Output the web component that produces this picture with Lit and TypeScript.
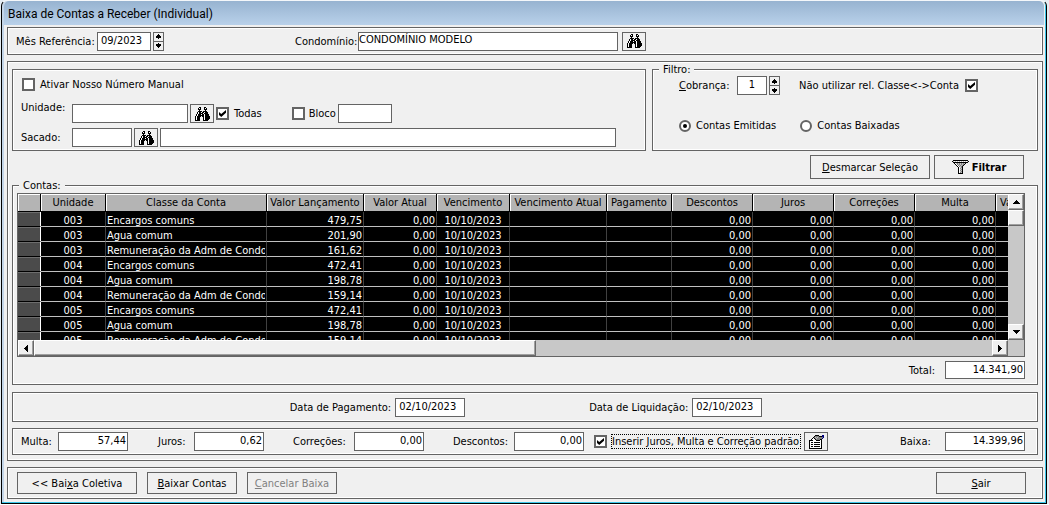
import { LitElement, html, css, svg } from "lit";
import { customElement } from "lit/decorators.js";

/** Turns rows of characters into crisp one-unit squares. */
const palette: Record<string, string> = {
  "#": "#000000",
  w: "#ffffff",
  g: "#808080",
  l: "#c0c0c0",
  b: "#000080",
};
const pixels = (rows: string[], cls = "icon") => {
  const w = Math.max(...rows.map((r) => r.length));
  return html`<svg class=${cls} width=${w} height=${rows.length} viewBox="0 0 ${w} ${rows.length}" shape-rendering="crispEdges" aria-hidden="true">
    ${rows.flatMap((r, y) =>
      [...r].map((c, x) => (palette[c] ? svg`<rect x=${x} y=${y} width="1" height="1" fill=${palette[c]}></rect>` : null))
    )}
  </svg>`;
};

const BINOCULARS = [
  "....##...##....",
  "...#w#...#w#...",
  "...###...###...",
  "....#.....#....",
  "...####.####...",
  "..#w##w##w###..",
  "..#w####w####..",
  ".#w###w##w####.",
  ".#w######w####.",
  "#w####.##w#####",
  "#w###...#w#####",
  "#w###...#w#####",
  "#w###...#w####.",
  "#####...#####..",
];

const FUNNEL = [
  ".###############.",
  "#lwlwlwlwlwlwlwl#",
  ".###############.",
  "..#wlglglglgl#...",
  "...#wglglglg#....",
  "....#wglglg#.....",
  ".....#wglg#......",
  "......#wlg#......",
  "......#wgl#......",
  "......#wlg#......",
  "......#wgl#......",
  "......#wlg#......",
  "......#wgl#......",
  "......#####......",
];

const PROPERTIES = [
  "......####...bb",
  ".....#gggg###bb",
  "....#glglgggggb",
  "...#w#glgggggb.",
  "..#www#gggg##..",
  "####www####w#..",
  "#wwwwwwwwwww#..",
  "#w##w######w#..",
  "#wwwwwwwwwww#..",
  "#w##w######w#..",
  "#wwwwwwwwwww#..",
  "#w##w######w#..",
  "#wwwwwwwwwww#..",
  "#############..",
];

const UP = ["...#...", "..###..", ".#####.", "#######"];
const DOWN = ["#######", ".#####.", "..###..", "...#..."];
const SPIN_UP = ["..#..", ".###.", "#####", "#####", "..#.."];
const SPIN_DOWN = ["..#..", "#####", "#####", ".###.", "..#.."];
const LEFT = ["...#", "..##", ".###", "####", ".###", "..##", "...#"];
const RIGHT = ["#...", "##..", "###.", "####", "###.", "##..", "#..."];

const COLUMNS: [string, string][] = [
  ["Unidade", "w-unit"],
  ["Classe da Conta", "w-class"],
  ["Valor Lançamento", "w-wide"],
  ["Valor Atual", "w-date"],
  ["Vencimento", "w-date"],
  ["Vencimento Atual", "w-wide"],
  ["Pagamento", "w-unit"],
  ["Descontos", "w-sum"],
  ["Juros", "w-sum"],
  ["Correções", "w-sum"],
  ["Multa", "w-sum"],
  ["Valor Total", "w-sum start"],
];

const ROWS: [string, string, string][] = [
  ["003", "Encargos comuns", "479,75"],
  ["003", "Agua comum", "201,90"],
  ["003", "Remuneração da Adm de Condomínio", "161,62"],
  ["004", "Encargos comuns", "472,41"],
  ["004", "Agua comum", "198,78"],
  ["004", "Remuneração da Adm de Condomínio", "159,14"],
  ["005", "Encargos comuns", "472,41"],
  ["005", "Agua comum", "198,78"],
  ["005", "Remuneração da Adm de Condomínio", "159,14"],
];

@customElement("accounts-grid")
export class AccountsGrid extends LitElement {
  static styles = css`
    :host {
      display: grid;
      grid-template-columns: minmax(0, 1fr) 16px;
      grid-template-rows: 146px 16px;
      border: 1px solid #646464;
      background: #c8c8c8;
    }
    .view {
      overflow: hidden;
      background: #000;
    }
    table {
      table-layout: fixed;
      width: 1059px;
      border-collapse: separate;
      border-spacing: 0;
    }
    th,
    td {
      box-sizing: border-box;
      padding: 0;
      font-weight: normal;
      white-space: nowrap;
      overflow: hidden;
    }
    th {
      height: 18px;
      line-height: 16px;
      color: #000;
      background: #b4b4b4;
      border-bottom: 1px solid #000;
      border-right: 1px solid #000;
      box-shadow: inset 1px 1px #fff;
      text-align: center;
    }
    .start {
      text-align: left;
      padding-left: 4px;
    }
    td {
      height: 15px;
      line-height: 14px;
      color: #fff;
      border-bottom: 1px solid #c0c0c0;
      border-right: 1px solid #404040;
    }
    .clip {
      display: block;
      height: 14px;
      overflow: hidden;
      line-height: 17px;
      margin: 0 1px;
    }
    .mark {
      background: #4b4b4b;
      border-right: 1px solid #fff;
      border-bottom: 1px solid #000;
      box-shadow: inset 0 1px #6e6e6e;
    }
    .center {
      text-align: center;
    }
    .num {
      text-align: right;
    }
    .w-mark {
      width: 23px;
    }
    .w-unit {
      width: 65px;
    }
    .w-class {
      width: 161px;
    }
    .w-wide {
      width: 97px;
    }
    .w-date {
      width: 73px;
    }
    .w-sum {
      width: 81px;
    }
    .bar {
      display: flex;
      background: #c8c8c8;
    }
    .vertical {
      flex-direction: column;
    }
    button,
    .thumb {
      box-sizing: border-box;
      display: grid;
      place-items: center;
      flex: none;
      width: 16px;
      height: 16px;
      padding: 0;
      background: #f0f0f0;
      border: 1px solid;
      border-color: #fff #696969 #696969 #fff;
      box-shadow: inset -1px -1px #a0a0a0;
    }
    .thumb-x {
      width: 50.7%;
    }
    .end {
      margin-top: auto;
    }
    .bar .right {
      margin-left: auto;
    }
    .icon {
      display: block;
    }
  `;

  render() {
    return html`
      <div class="view">
        <table>
          <thead>
            <tr>
              <th class="w-mark"></th>
              ${COLUMNS.map(([name, width]) => html`<th class=${width}>${name}</th>`)}
            </tr>
          </thead>
          <tbody>
            ${ROWS.map(
              ([unit, kind, value]) => html`<tr>
                <td class="mark"></td>
                <td class="center"><span class="clip">${unit}</span></td>
                <td><span class="clip">${kind}</span></td>
                <td class="num"><span class="clip">${value}</span></td>
                <td class="num"><span class="clip">0,00</span></td>
                <td class="center"><span class="clip">10/10/2023</span></td>
                <td></td>
                <td></td>
                ${[0, 1, 2, 3].map(() => html`<td class="num"><span class="clip">0,00</span></td>`)}
                <td></td>
              </tr>`
            )}
          </tbody>
        </table>
      </div>
      <div class="bar vertical">
        <button aria-label="Rolar para cima">${pixels(UP)}</button>
        <div class="thumb"></div>
        <button class="end" aria-label="Rolar para baixo">${pixels(DOWN)}</button>
      </div>
      <div class="bar">
        <button aria-label="Rolar para a esquerda">${pixels(LEFT)}</button>
        <div class="thumb thumb-x"></div>
        <button class="right" aria-label="Rolar para a direita">${pixels(RIGHT)}</button>
      </div>
    `;
  }
}

@customElement("app-root")
export class AppRoot extends LitElement {
  static styles = css`
    :host {
      display: block;
      box-sizing: border-box;
      padding-right: 2px;
      background: #e4ecf2;
      font: 11px/13px "DejaVu Sans Condensed", Tahoma, sans-serif;
      color: #000;
    }
    * {
      box-sizing: border-box;
    }
    .window {
      margin: 0 0 1px 1px;
      border: 1px solid #000;
      border-top-color: #f4f7fa;
      border-radius: 6px 6px 0 0;
      background: #f0f0f0;
      box-shadow: inset -1px -1px #3cc8ea, inset 2px 0 #c3d5e8;
      padding-bottom: 4px;
    }
    .title {
      height: 24px;
      margin: 0 2px;
      padding: 0 4px;
      font: 12px/26px Roboto, "Segoe UI", sans-serif;
      background: linear-gradient(#97b3d0, #b9d1ea);
      border-radius: 5px 5px 0 0;
    }
    .body {
      display: flex;
      flex-direction: column;
      gap: 6px;
      padding: 2px 3px 0 5px;
    }
    .panel,
    fieldset {
      border: 1px solid #646464;
      box-shadow: inset 0 0 0 1px #fff;
      margin: 0;
      min-width: 0;
    }
    legend {
      background: #f0f0f0;
      padding: 0 4px;
      margin-left: 2px;
      height: 13px;
    }
    .row {
      display: flex;
      align-items: center;
    }
    .reference {
      height: 28px;
      padding: 0 8px;
    }
    .main {
      padding: 1px 4px 5px;
    }
    .top {
      display: grid;
      grid-template-columns: minmax(0, 634fr) minmax(0, 386fr);
      gap: 6px;
    }
    .search {
      height: 82px;
      margin-top: 6px;
      padding: 8px 8px 3px;
      display: flex;
      flex-direction: column;
      gap: 5px;
    }
    .manual {
      margin: 0 0 8px 1px;
    }
    .upper {
      align-self: flex-start;
      line-height: 8px;
    }
    .filter {
      height: 88px;
      padding: 0 20px 0 26px;
    }
    .filter legend {
      margin-left: -20px;
    }
    .filter .radios {
      margin-top: 24px;
    }
    .label {
      flex: none;
    }
    .l-unit {
      width: 51px;
    }
    .l-ref {
      width: 81px;
    }
    .l-cond {
      width: 63px;
      margin-left: 131px;
    }
    .l-charge {
      width: 58px;
    }
    .l-rel {
      width: 166px;
      margin-left: 19px;
    }
    input {
      font: inherit;
      color: #000;
      margin: 0;
      border-radius: 0;
      outline: none;
    }
    .field {
      height: 19px;
      min-width: 0;
      background: #fff;
      border: 1px solid #646464;
      padding: 0 3px 2px;
      flex: none;
    }
    .flush {
      padding: 0 0 4px;
    }
    .num {
      text-align: right;
      padding: 0 1px 2px;
    }
    .mid {
      text-align: center;
    }
    .f30 {
      width: 30px;
    }
    .f54 {
      width: 54px;
    }
    .f60 {
      width: 60px;
    }
    .f70 {
      width: 70px;
    }
    .f80 {
      width: 80px;
    }
    .f116 {
      width: 116px;
    }
    .f260 {
      width: 260px;
    }
    .f456 {
      flex: 0 1 456px;
    }
    .spin {
      display: flex;
      flex-direction: column;
      flex: none;
      width: 11px;
      height: 19px;
      margin-left: 2px;
      border: 1px solid #646464;
      background: #646464;
      gap: 1px;
    }
    .spin button {
      flex: 1;
      display: grid;
      place-items: center;
      padding: 0;
      border: 0;
      min-height: 0;
      background: #f0f0f0;
    }
    .icon {
      display: block;
      flex: none;
    }
    .push {
      font: inherit;
      color: #000;
      display: flex;
      align-items: center;
      justify-content: center;
      gap: 3px;
      flex: none;
      padding: 0;
      height: 22px;
      background: #f0f0f0;
      border: 1px solid #646464;
      border-radius: 0;
      white-space: nowrap;
    }
    .push:disabled {
      color: #808080;
    }
    .b24 {
      width: 24px;
      height: 19px;
    }
    .b90 {
      width: 90px;
    }
    .b120 {
      width: 120px;
    }
    .tall {
      height: 24px;
    }
    .bold {
      font-weight: bold;
    }
    .gap {
      margin-left: 2px;
    }
    .check,
    .radio {
      appearance: none;
      flex: none;
      width: 13px;
      height: 13px;
      background: #fff;
      border: 2px solid #646464;
      display: grid;
      place-items: center;
    }
    .radio {
      width: 12px;
      height: 12px;
      border-radius: 50%;
    }
    .radio:checked::before {
      content: "";
      width: 4px;
      height: 4px;
      border-radius: 50%;
      background: #000;
    }
    .check:checked::before {
      content: "";
      width: 7px;
      height: 7px;
      background: #000;
      clip-path: polygon(0 28%, 32% 58%, 100% 0, 100% 38%, 32% 100%, 0 70%);
    }
    .option {
      display: flex;
      align-items: center;
      gap: 5px;
      flex: none;
      white-space: nowrap;
    }
    .bloco {
      margin-left: 30px;
      width: 46px;
      gap: 4px;
    }
    .second {
      margin-left: 24px;
    }
    .actions {
      display: flex;
      justify-content: flex-end;
      gap: 4px;
      padding: 4px 14px 0 0;
    }
    .accounts {
      padding: 1px 12px 5px 4px;
    }
    .total {
      justify-content: flex-end;
      padding-top: 4px;
      gap: 10px;
    }
    .total .field {
      height: 18px;
    }
    .strip {
      margin-top: 7px;
    }
    .dates {
      height: 30px;
      padding: 0 6px 0 8px;
      justify-content: center;
      gap: 124px;
    }
    .pair {
      display: flex;
      align-items: center;
      gap: 4px;
      flex: none;
    }
    .values {
      height: 27px;
      padding: 0 12px 0 8px;
      margin-top: 6px;
    }
    .l-multa {
      width: 37px;
    }
    .l-juros {
      width: 36px;
    }
    .l-corr {
      width: 61px;
    }
    .step {
      margin-left: 30px;
    }
    .corr {
      margin-left: 29px;
    }
    .insert {
      margin: 0 4px 0 10px;
    }
    .focus {
      outline: 1px dotted #000;
      width: 188px;
    }
    .baixa {
      margin-left: auto;
    }
    .baixa .l-baixa {
      width: 45px;
    }
    .footer {
      height: 32px;
      padding: 0 16px 0 9px;
      gap: 10px;
    }
    .exit {
      margin-left: auto;
    }
  `;

  private spinner(name: string) {
    return html`<span class="spin">
      <button aria-label="Aumentar ${name}">${pixels(SPIN_UP)}</button>
      <button aria-label="Diminuir ${name}">${pixels(SPIN_DOWN)}</button>
    </span>`;
  }

  private find(name: string) {
    return html`<button class="push b24 gap" aria-label="Localizar ${name}">${pixels(BINOCULARS)}</button>`;
  }

  render() {
    return html`
      <main class="window">
        <h1 class="title">Baixa de Contas a Receber (Individual)</h1>
        <div class="body">
          <section class="panel row reference">
            <label class="label l-ref" for="ref">Mês Referência:</label>
            <input class="field f54" id="ref" value="09/2023" />
            ${this.spinner("mês")}
            <label class="label l-cond" for="cond">Condomínio:</label>
            <input class="field flush f260" id="cond" value="CONDOMÍNIO MODELO" />
            <span class="gap">${this.find("condomínio")}</span>
          </section>

          <section class="panel main">
            <div class="top">
              <div class="panel search">
                <label class="option manual"><input class="check" type="checkbox" />Ativar Nosso Número Manual</label>
                <div class="row">
                  <label class="label l-unit upper" for="unit">Unidade:</label>
                  <input class="field f116" id="unit" />
                  ${this.find("unidade")}
                  <label class="option gap"><input class="check" type="checkbox" checked />Todas</label>
                  <label class="option bloco"><input class="check" type="checkbox" />Bloco</label>
                  <input class="field f54" aria-label="Bloco" />
                </div>
                <div class="row">
                  <label class="label l-unit" for="payer">Sacado:</label>
                  <input class="field f60" id="payer" />
                  ${this.find("sacado")}
                  <input class="field f456 gap" aria-label="Nome do sacado" />
                </div>
              </div>
              <fieldset class="filter">
                <legend>Filtro:</legend>
                <div class="row">
                  <label class="label l-charge" for="charge"><u>C</u>obrança:</label>
                  <input class="field mid f30" id="charge" value="1" />
                  ${this.spinner("cobrança")}
                  <label class="label l-rel" for="rel">Não utilizar rel. Classe&lt;-&gt;Conta</label>
                  <input class="check" type="checkbox" id="rel" checked />
                </div>
                <div class="row radios">
                  <label class="option"><input class="radio" type="radio" name="kind" checked />Contas Emitidas</label>
                  <label class="option second"><input class="radio" type="radio" name="kind" />Contas Baixadas</label>
                </div>
              </fieldset>
            </div>

            <div class="actions">
              <button class="push tall b120"><span><u>D</u>esmarcar Seleção</span></button>
              <button class="push tall b90 bold">${pixels(FUNNEL)}Filtrar</button>
            </div>

            <fieldset class="accounts">
              <legend>Contas:</legend>
              <accounts-grid></accounts-grid>
              <div class="row total">
                <label for="total">Total:</label>
                <input class="field num f80" id="total" value="14.341,90" />
              </div>
            </fieldset>

            <div class="panel row dates strip">
              <span class="pair"><label for="paid">Data de Pagamento:</label><input class="field f70" id="paid" value="02/10/2023" /></span>
              <span class="pair"><label for="settled">Data de Liquidação:</label><input class="field f70" id="settled" value="02/10/2023" /></span>
            </div>

            <div class="panel row values">
              <label class="label l-multa" for="multa">Multa:</label>
              <input class="field num f70" id="multa" value="57,44" />
              <label class="label l-juros step" for="juros">Juros:</label>
              <input class="field num f70" id="juros" value="0,62" />
              <label class="label l-corr corr" for="corr">Correções:</label>
              <input class="field num f70" id="corr" value="0,00" />
              <label class="label l-corr corr" for="desc">Descontos:</label>
              <input class="field num f70" id="desc" value="0,00" />
              <label class="option insert"><input class="check" type="checkbox" checked /><span class="focus">Inserir Juros, Multa e Correção padrão</span></label>
              <button class="push b24" aria-label="Configurar correção">${pixels(PROPERTIES)}</button>
              <span class="row baixa"><label class="label l-baixa" for="baixa">Baixa:</label><input class="field num f80" id="baixa" value="14.399,96" /></span>
            </div>
          </section>

          <section class="panel row footer">
            <button class="push b120"><span>&lt;&lt; Bai<u>x</u>a Coletiva</span></button>
            <button class="push b90"><span><u>B</u>aixar Contas</span></button>
            <button class="push b90" disabled><span><u>C</u>ancelar Baixa</span></button>
            <button class="push b90 exit"><span><u>S</u>air</span></button>
          </section>
        </div>
      </main>
    `;
  }
}
